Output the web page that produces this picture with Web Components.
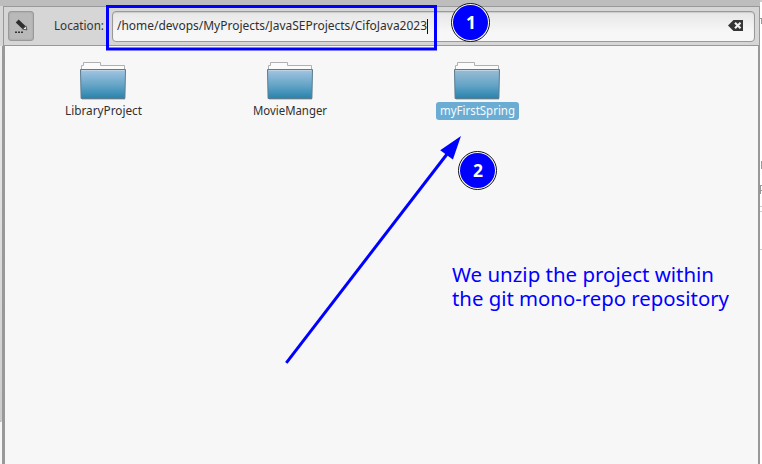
<!DOCTYPE html>
<html lang="en"><head><meta charset="utf-8"><title>File manager</title>
<style>body{margin:0;width:762px;height:464px;overflow:hidden;font-family:"Noto Sans","Open Sans",sans-serif}</style></head>
<body><file-window></file-window>
<script>
const define = (name, html) => customElements.define(name, class extends HTMLElement {
  connectedCallback() {
    if (this.shadowRoot) return;
    const t = document.createElement('template');
    t.innerHTML = typeof html === 'function' ? html(this) : html;
    this.attachShadow({mode:'open'}).append(t.content.cloneNode(true));
  }
});

/* One line of text set to an exact advance width. */
define('fit-text', el => {
  const w = +el.getAttribute('width'), s = +el.getAttribute('size'), h = +el.getAttribute('height');
  return `<style>:host{display:block;flex:none;width:${w}px;height:${h}px}svg{display:block;overflow:visible}</style>
  <svg width="${w}" height="${h}"><text x="0" y="${el.getAttribute('base')}" font-size="${s}" textLength="${w}" lengthAdjust="spacingAndGlyphs" fill="currentColor">${el.getAttribute('text')}</text></svg>`;
});

define('edit-toggle', `<style>:host{display:block;box-sizing:border-box;flex:none;width:26px;height:30px;border:1px solid #999;border-radius:3px;background:#b9b9b9;box-shadow:inset 0 0 2px #999}svg{display:block}</style>
<svg width="24" height="28" viewBox="0 0 24 28"><path d="M8.2 9 15 15.6" stroke="#2e2e2e" stroke-width="4.2"/><path d="m13.7 17.2 3.2-3.3 1 4z" fill="#eee" stroke="#333" stroke-width=".8"/><path d="M6 20.3h2m1 0h2m1 0h2" stroke="#333" stroke-width="1.4"/></svg>`);

define('location-entry', `<style>:host{display:flex;box-sizing:border-box;flex:none;width:643px;height:31px;border:1px solid #999;border-radius:4px;background:linear-gradient(#e6e6e6,#f7f7f7 70%);padding:0 11px 0 4px;color:#2e2e2e;box-shadow:inset 0 1px 1px #ccc}
.caret{width:1px;height:15px;margin-top:7px;background:#111}.clear{display:block;margin:8px 0 0 auto}</style>
<fit-text text="/home/devops/MyProjects/JavaSEProjects/CifoJava2023" width="310" size="12.4" height="29" base="18"></fit-text><span class="caret"></span>
<svg class="clear" width="15" height="12"><path d="M0 5.5 5.5 0H15v11H5.5z" fill="#353535"/><path d="m7 2.7 5.5 5.6m0-5.6L7 8.3" stroke="#f2f2f2" stroke-width="2.1"/></svg>`);

define('location-bar', `<style>:host{display:flex;box-sizing:border-box;width:760px;height:40px;border-top:1px solid #999;border-bottom:1px solid #999;background:#d6d6d6;padding:4px 0 0 8px;color:#333;border-right:1px solid #999}
fit-text{margin-left:20px}location-entry{margin-left:8px}</style>
<edit-toggle></edit-toggle><fit-text text="Location:" width="50" size="12.2" height="31" base="19"></fit-text><location-entry></location-entry>`);

define('folder-item', el => `<style>:host{display:flex;flex-direction:column;align-items:center;color:#303030}
svg{display:block}.label{display:flex;height:18px;padding:0 4px;border-radius:3px;margin-top:1px}
:host([selected]) .label{background:#6bacd3;color:#f5fbff}</style>
<svg width="48" height="40" viewBox="0 0 48 40"><defs><linearGradient id="g" x2="0" y2="1"><stop stop-color="${el.hasAttribute('selected')?'#9bbdd4':'#a5c5e2'}"/><stop offset=".55" stop-color="#63a4c6"/><stop offset="1" stop-color="#2783ae"/></linearGradient></defs>
<path d="M2.5 8V4.5h2v-3h17v3h24V8" fill="#fbfbfb" stroke="#b0b0b0"/><path d="M3 38.5h43" stroke="#ccc"/><path d="M1.5 8.5h45l-.6 29H2.1z" fill="url(#g)" stroke="#5c7c8e"/><path d="M2.5 9.5h43" stroke="#bdd3e6"/></svg>
<div class="label"><fit-text text="${el.getAttribute('name')}" width="${el.getAttribute('width')}" size="12.2" height="18" base="13"></fit-text></div>`);

define('folder-view', `<style>:host{display:grid;grid-template-columns:186px 188px 186px;align-content:start;justify-content:start;box-sizing:border-box;flex:1;background:#f7f7f7;padding:15px 0 0 5px}</style>
<folder-item name="LibraryProject" width="77"></folder-item><folder-item name="MovieManger" width="74"></folder-item><folder-item name="myFirstSpring" width="75" selected></folder-item>`);

define('side-edge', `<style>:host{display:block;box-sizing:border-box;flex:none;width:5px;border-right:3px solid #999;background:#f7f7f7}i{display:block;height:375px;background:linear-gradient(#eee,#ccc);border-bottom:1px solid #aaa;border-radius:0 0 2px}</style><i></i>`);

define('back-window', `<style>:host{display:block;width:2px;height:464px;background:#fff}svg{display:block}</style>
<svg width="2" height="464"><path d="M0 0h2v2H0z" fill="#ccc"/><path d="M0 18.5h2M1.5 18v6M1.5 161v8M0 185.5h2M0 190.5h2M.5 185v9" stroke="#999"/><path d="M0 206.5h2M0 211.5h2M0 249.5h2" stroke="#ccc"/></svg>`);

define('step-badge', el => `<style>:host{display:grid;box-sizing:border-box;position:absolute;width:39px;height:39px;border-radius:50%;border:1.3px solid #111;background:#fff;padding:1px}
span{display:flex;justify-content:center;border-radius:50%;background:#00f;color:#fff;font-weight:bold}</style>
<span><fit-text text="${el.getAttribute('n')}" width="10" size="17.5" height="33" base="24"></fit-text></span>`);

define('step-note', `<style>:host{display:block;position:absolute;color:#00f}</style>
<fit-text text="We unzip the project within" width="262" size="19.7" height="24" base="18"></fit-text>
<fit-text text="the git mono-repo repository" width="277" size="19.7" height="24" base="18"></fit-text>`);

define('callout-lines', `<style>:host{display:block;position:absolute;inset:0}svg{display:block}</style>
<svg width="762" height="464" fill="none" stroke="#00f"><rect x="107.5" y="6.5" width="328" height="42.5" stroke-width="3"/><path d="M286.3 362.8 449 151.5" stroke-width="3"/><path d="m461 136-20.8 14.3 12.7 9.3z" fill="#00f" stroke="none"/></svg>`);

define('file-window', `<style>:host{display:flex;position:relative;width:762px;height:464px;background:#bdbdbd}
.window{display:flex;flex-direction:column;width:760px}.top{height:6px;background:#bdbdbd}.bar{display:flex}.body{display:flex;flex:1;border-right:2px solid #999}
.bar::before{content:"";width:3px;background:#d6d6d6;border-right:1px solid #999}.bar location-bar{width:756px;padding-left:4px}</style>
<div class="window"><div class="top"></div><div class="bar"><location-bar></location-bar></div><div class="body"><side-edge></side-edge><folder-view></folder-view></div></div><back-window></back-window>
<callout-lines></callout-lines><step-badge n="1" style="left:451px;top:3px"></step-badge><step-badge n="2" style="left:458px;top:151px"></step-badge><step-note style="left:452px;top:264px"></step-note>`);
</script></body></html>
